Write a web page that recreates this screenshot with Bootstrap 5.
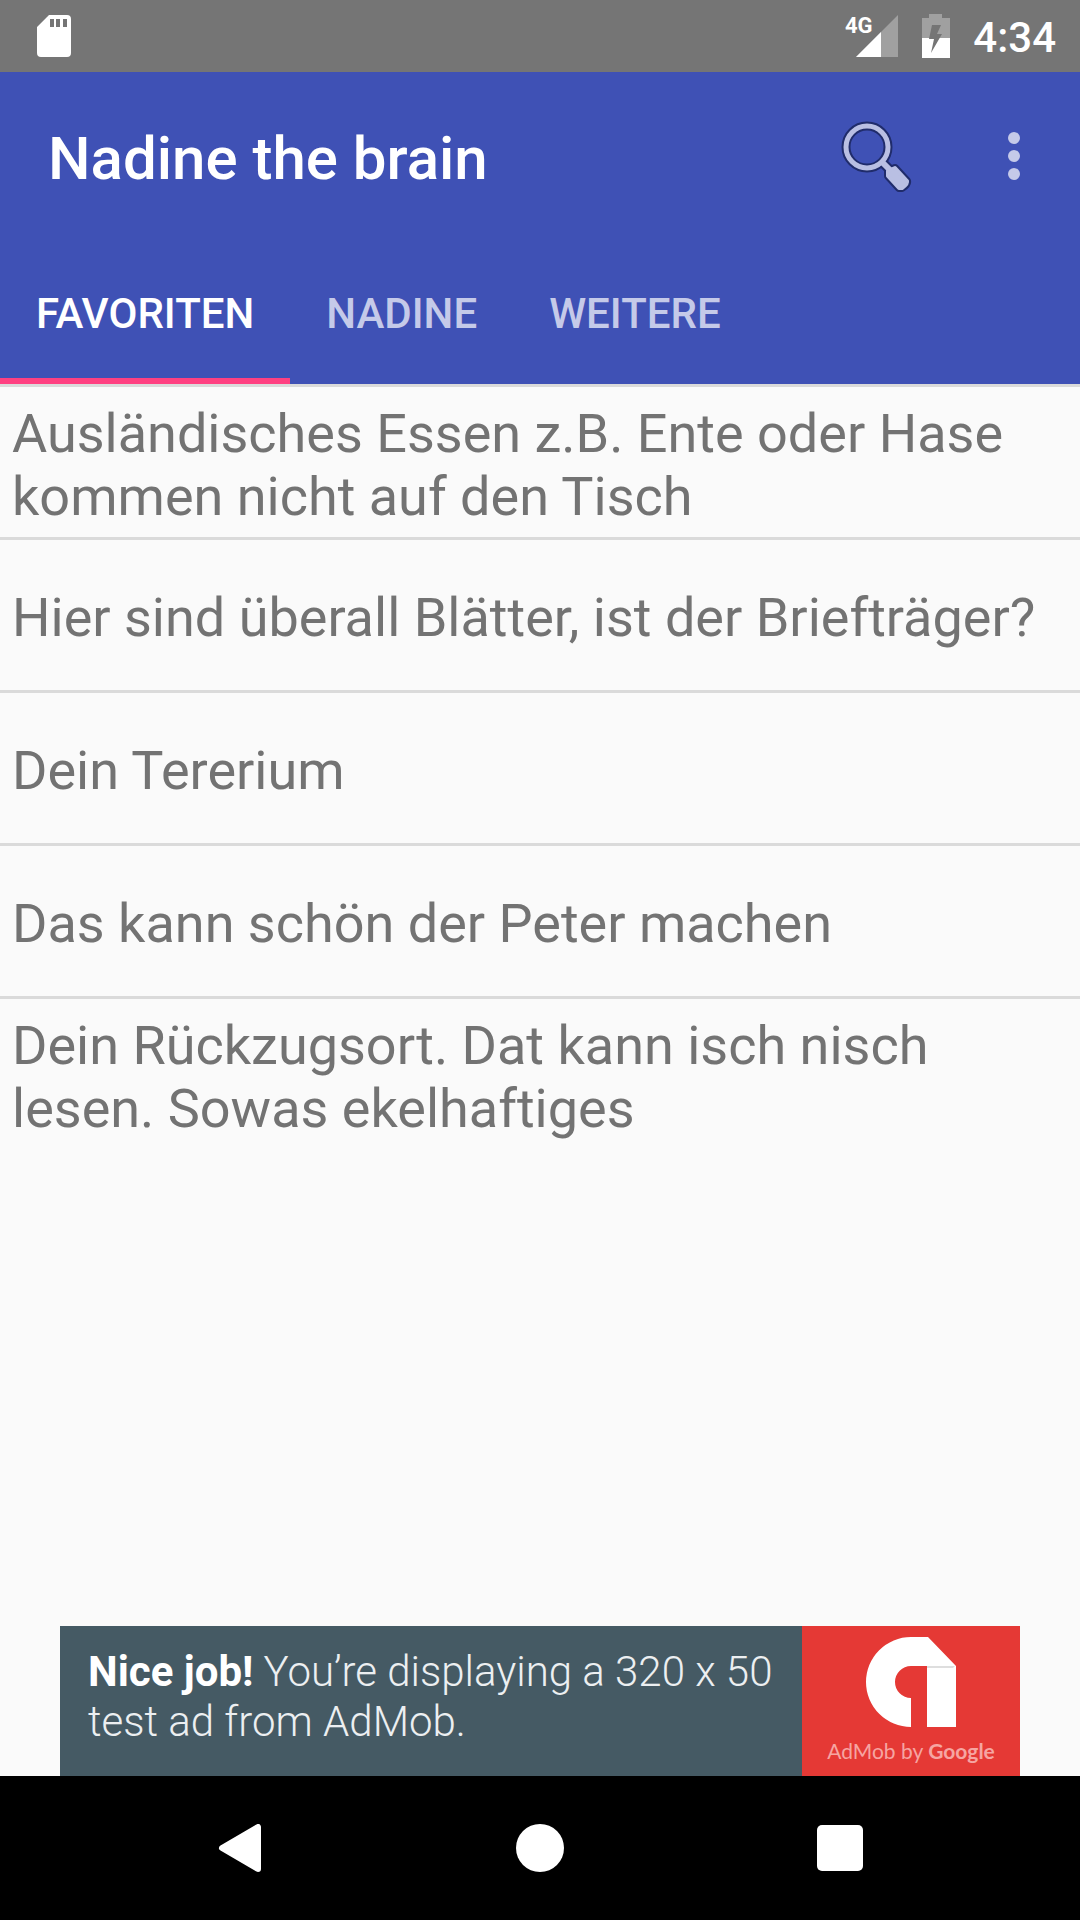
<!DOCTYPE html>
<html lang="de">
<head>
<meta charset="utf-8">
<meta name="viewport" content="width=device-width, initial-scale=1">
<title>Nadine the brain</title>
<link href="https://cdn.jsdelivr.net/npm/bootstrap@5.3.0/dist/css/bootstrap.min.css" rel="stylesheet">
<style>
  body { font-family: Roboto, "Noto Sans", sans-serif; background: #fafafa; color: #737373; }
  svg { display: block; flex: none; }
  .status-bar { height: 72px; background: #757575; color: #fff; padding: 0 24px 0 36px; }
  .status-icons { gap: 22px; }
  .clock { font-size: 42px; line-height: 50px; font-weight: 500; padding-top: 3px; }
  .net-label { font: 700 22px "Liberation Sans Narrow", Roboto, sans-serif; fill: #fff; }
  .app-header { background: #3f51b5; }
  .title-bar { height: 168px; padding: 0 30px 0 48px; }
  .app-title { font-size: 60px; line-height: 70px; font-weight: 500; color: #fff; padding-top: 6px; }
  .icon-btn { background: none; border: 0; padding: 0; }
  .title-actions { gap: 66px; }
  .tab-strip { height: 144px; }
  .tab-strip .tab-link { height: 144px; padding: 10px 36px 0; border: 0; border-bottom: 6px solid transparent; border-radius: 0; background: none; color: #c5cae9; font-size: 42px; line-height: 50px; font-weight: 500; }
  .tab-strip .tab-link.active { color: #fff; border-bottom-color: #ff4081; }
  .quotes { border-top: 3px solid #dadada; }
  .quotes .quote { min-height: 150px; padding: 5px 12px 0; background: none; color: inherit; border: 0; border-radius: 0; font-size: 54px; line-height: 63px; }
  .quotes .quote + .quote { min-height: 153px; border-top: 3px solid #dadada; }
  .ad { width: 960px; max-width: 100%; height: 150px; background: #455a64; text-decoration: none; }
  .ad-copy { padding: 21px 0 0 28px; color: #eceff1; font-size: 42px; line-height: 50px; font-weight: 300; }
  .ad-copy strong { font-weight: 700; color: #fff; }
  .ad-brand { width: 218px; background: #e53935; color: #f6a5a2; padding-top: 11px; }
  .ad-brand-name { font: 400 21px/28px Lato, sans-serif; padding-top: 10px; }
  .ad-brand-name b { font-weight: 700; }
  .nav-keys { height: 144px; background: #000; padding: 0 90px; }
</style>
<script src="https://cdn.jsdelivr.net/npm/bootstrap@5.3.0/dist/js/bootstrap.bundle.min.js" defer></script>
</head>
<body class="d-flex flex-column min-vh-100">
  <div class="status-bar d-flex align-items-center justify-content-between">
    <svg width="36" height="44" viewBox="0 0 36 44" aria-label="SD card">
      <path fill="#fff" fill-rule="evenodd" d="M13 1H31Q35 1 35 5V39Q35 43 31 43H5Q1 43 1 39V13ZM14 5V13H18V5ZM20 5V13H24V5ZM27 5V13H31V5Z"/>
    </svg>
    <div class="status-icons d-flex align-items-center">
      <svg width="56" height="44" viewBox="0 0 56 44" aria-label="Mobile signal">
        <path fill="#a0a0a0" d="M55 1V43H13Z"/>
        <path fill="#fff" d="M38 18V43H13Z"/>
        <text class="net-label" x="2" y="19">4G</text>
      </svg>
      <svg width="30" height="44" viewBox="0 0 30 44" aria-label="Battery charging">
        <path fill="#a0a0a0" d="M8 0H21V4H29V24H1V4H8Z"/>
        <path fill="#fff" d="M1 24H29V44H1Z"/>
        <path fill="#757575" d="M11 11H20L16 20H21L10 39L13 25H8Z"/>
      </svg>
      <span class="clock">4:34</span>
    </div>
  </div>

  <header class="app-header">
    <div class="title-bar d-flex align-items-center justify-content-between">
      <h1 class="app-title m-0">Nadine the brain</h1>
      <div class="title-actions d-flex align-items-center">
        <button class="icon-btn" type="button" aria-label="Suchen">
          <svg width="72" height="72" viewBox="0 0 72 72">
            <g fill="none" stroke="#202c6b">
              <circle cx="27" cy="27" r="21" stroke-width="9"/>
              <path d="M42 42L50 50" stroke-width="10"/>
            </g>
            <path fill="#202c6b" stroke="#202c6b" stroke-width="8" stroke-linejoin="round" d="M48 51L55 48L67 61Q68 64 62 68L59 68L48 56Z"/>
            <g fill="none" stroke="#b9bfe3">
              <circle cx="27" cy="27" r="21" stroke-width="5"/>
              <path d="M41 41L50 50" stroke-width="6"/>
            </g>
            <path fill="#b9bfe3" stroke="#b9bfe3" stroke-width="4" stroke-linejoin="round" d="M48 51L55 48L67 61Q68 64 62 68L59 68L48 56Z"/>
          </svg>
        </button>
        <button class="icon-btn" type="button" aria-label="Weitere Optionen">
          <svg width="72" height="72" viewBox="0 0 72 72" fill="#c5cae9">
            <circle cx="36" cy="18" r="6"/><circle cx="36" cy="36" r="6"/><circle cx="36" cy="54" r="6"/>
          </svg>
        </button>
      </div>
    </div>
    <div class="tab-strip nav" role="tablist">
      <button class="tab-link active" type="button" role="tab" aria-selected="true">FAVORITEN</button>
      <button class="tab-link" type="button" role="tab" aria-selected="false">NADINE</button>
      <button class="tab-link" type="button" role="tab" aria-selected="false">WEITERE</button>
    </div>
  </header>

  <main class="flex-grow-1 d-flex flex-column">
    <ul class="quotes list-group list-group-flush rounded-0">
      <li class="quote list-group-item d-flex align-items-center">Ausländisches Essen z.B. Ente oder Hase kommen nicht auf den Tisch</li>
      <li class="quote list-group-item d-flex align-items-center">Hier sind überall Blätter, ist der Briefträger?</li>
      <li class="quote list-group-item d-flex align-items-center">Dein Tererium</li>
      <li class="quote list-group-item d-flex align-items-center">Das kann schön der Peter machen</li>
      <li class="quote list-group-item d-flex align-items-center">Dein Rückzugsort. Dat kann isch nisch lesen. Sowas ekelhaftiges</li>
    </ul>
    <a class="ad d-flex mt-auto mx-auto" href="#">
      <span class="ad-copy flex-grow-1"><strong>Nice job!</strong> You’re displaying a 320 x 50 test ad from AdMob.</span>
      <span class="ad-brand d-flex flex-column align-items-center flex-shrink-0">
        <svg width="90" height="90" viewBox="0 0 90 90" aria-hidden="true">
          <path fill="#fff" d="M45 0H62L90 29V90H61V29H45A16 16 0 0 0 45 61V90A45 45 0 0 1 45 0Z"/>
          <path fill="#dedede" d="M61 29H89L87 31H61Z"/>
        </svg>
        <span class="ad-brand-name">AdMob by <b>Google</b></span>
      </span>
    </a>
  </main>

  <nav class="nav-keys row g-0 align-items-center" aria-label="System">
    <button class="icon-btn col d-flex justify-content-center" type="button" aria-label="Zurück">
      <svg width="48" height="48" viewBox="0 0 48 48"><path fill="#fff" stroke="#fff" stroke-width="6" stroke-linejoin="round" d="M6 24L42 3V45Z"/></svg>
    </button>
    <button class="icon-btn col d-flex justify-content-center" type="button" aria-label="Startseite">
      <svg width="48" height="48" viewBox="0 0 48 48"><circle cx="24" cy="24" r="24" fill="#fff"/></svg>
    </button>
    <button class="icon-btn col d-flex justify-content-center" type="button" aria-label="Übersicht">
      <svg width="48" height="48" viewBox="0 0 48 48"><rect x="1" y="1" width="46" height="46" rx="5" fill="#fff"/></svg>
    </button>
  </nav>
</body>
</html>
